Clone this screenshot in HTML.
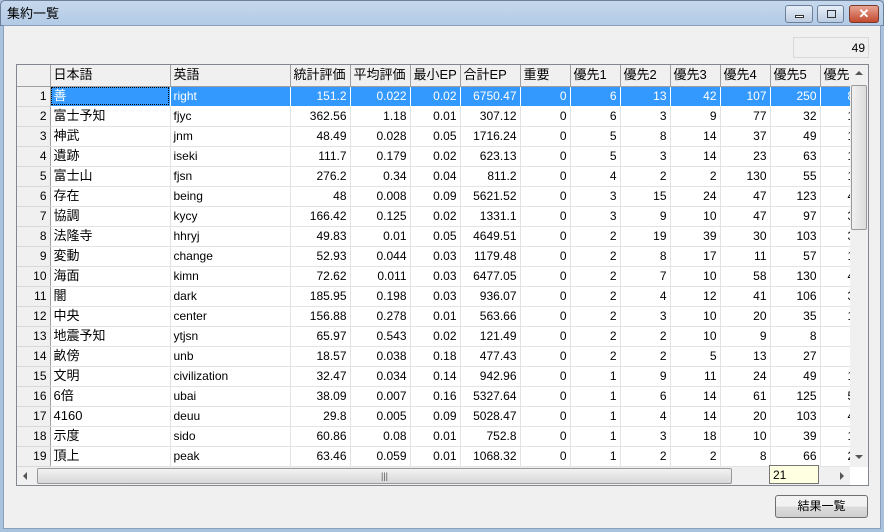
<!DOCTYPE html>
<html><head><meta charset="utf-8"><style>
*{box-sizing:border-box;margin:0;padding:0}
body{width:884px;height:532px;overflow:hidden;background:#a9c3de;font-family:"Liberation Sans","Noto Sans CJK JP",sans-serif;font-size:12px;color:#000;position:relative}
.title{position:absolute;left:0;top:0;width:884px;height:26px;background:linear-gradient(#c6d8ec,#b3cbe6);border-radius:5px 5px 0 0;border:1px solid #6b7f99}
.title span{position:absolute;left:6px;top:5px;font-size:13px;line-height:15px}
.client{position:absolute;left:3px;top:25px;width:878px;height:504px;background:#f0f0f0;border:1px solid #8aa0ba}
.cb{position:absolute;top:5px;height:18px;border:1px solid #6b7f99;border-radius:3px;background:linear-gradient(#e6eef8,#bccde2)}
.grid{position:absolute;left:16px;top:64px;width:853px;height:422px;border:1px solid #828790;background:#fff}
.clip{position:absolute;left:0;top:0;width:833px;height:402px;overflow:hidden}
table{border-collapse:collapse;table-layout:fixed;width:853px}
td{height:20px;line-height:14px;border-right:1px solid #e3e3e3;border-bottom:1px solid #e3e3e3;padding:0 3px;white-space:nowrap;overflow:hidden;text-align:right;vertical-align:middle}
tr.h td{background:#f0f0f0;border-right:1px solid #a0a0a0;border-bottom:1px solid #a0a0a0;text-align:left;font-size:13px;height:21px}
td.rh{background:#f0f0f0;border-right:1px solid #a0a0a0;border-bottom:1px solid #d8d8d8}
td.l{text-align:left}
td.j{text-align:left;font-size:13px}
td.z{text-align:left;padding-left:27px}
tr.h td.z{padding-left:3px}
tr.s td{background:#3399ff;color:#fff;border-color:#fff}
tr.s td.rh{background:#f0f0f0;color:#000;border-color:#a0a0a0 #a0a0a0 #d8d8d8 #a0a0a0}
tr.s td.f{outline:1px dotted #000;outline-offset:-2px}
.vs{position:absolute;left:833px;top:0;width:18px;height:402px;background:#f0f0f0}
.hs{position:absolute;left:0;top:402px;width:833px;height:18px;background:#f0f0f0}
</style></head><body>
<div class="title"><span>集約一覧</span></div>
<div class="cb" style="left:785px;width:28px"><div style="position:absolute;left:9px;top:9px;width:9px;height:3px;border:1px solid #333;background:#fff"></div></div>
<div class="cb" style="left:817px;width:27px"><div style="position:absolute;left:9px;top:4px;width:9px;height:8px;border:1px solid #333"></div></div>
<div class="cb" style="left:849px;width:30px;background:linear-gradient(#e8a493,#c24a2f);border-color:#7a3a2a;color:#fff;font-weight:bold;text-align:center;line-height:16px;font-size:13px">✕</div>
<div class="client"></div>
<div style="position:absolute;left:793px;top:37px;width:76px;height:21px;border:1px solid #d8d8d8;background:#f0f0f0;text-align:right;padding:3px 3px 0 0">49</div>
<div class="grid">
<div class="clip"><table>
<colgroup><col style="width:33px"><col style="width:120px"><col style="width:120px"><col style="width:60px"><col style="width:60px"><col style="width:50px"><col style="width:60px"><col style="width:50px"><col style="width:50px"><col style="width:50px"><col style="width:50px"><col style="width:50px"><col style="width:50px"><col style="width:50px"></colgroup>
<tr class="h"><td class="rh"></td><td>日本語</td><td>英語</td><td>統計評価</td><td>平均評価</td><td>最小EP</td><td>合計EP</td><td>重要</td><td>優先1</td><td>優先2</td><td>優先3</td><td>優先4</td><td>優先5</td><td class="z">優先6</td></tr>
<tr class="s"><td class="rh">1</td><td class="j f">善</td><td class="l">right</td><td>151.2</td><td>0.022</td><td>0.02</td><td>6750.47</td><td>0</td><td>6</td><td>13</td><td>42</td><td>107</td><td>250</td><td class="z">87</td></tr>
<tr><td class="rh">2</td><td class="j">富士予知</td><td class="l">fjyc</td><td>362.56</td><td>1.18</td><td>0.01</td><td>307.12</td><td>0</td><td>6</td><td>3</td><td>9</td><td>77</td><td>32</td><td class="z">17</td></tr>
<tr><td class="rh">3</td><td class="j">神武</td><td class="l">jnm</td><td>48.49</td><td>0.028</td><td>0.05</td><td>1716.24</td><td>0</td><td>5</td><td>8</td><td>14</td><td>37</td><td>49</td><td class="z">17</td></tr>
<tr><td class="rh">4</td><td class="j">遺跡</td><td class="l">iseki</td><td>111.7</td><td>0.179</td><td>0.02</td><td>623.13</td><td>0</td><td>5</td><td>3</td><td>14</td><td>23</td><td>63</td><td class="z">17</td></tr>
<tr><td class="rh">5</td><td class="j">富士山</td><td class="l">fjsn</td><td>276.2</td><td>0.34</td><td>0.04</td><td>811.2</td><td>0</td><td>4</td><td>2</td><td>2</td><td>130</td><td>55</td><td class="z">17</td></tr>
<tr><td class="rh">6</td><td class="j">存在</td><td class="l">being</td><td>48</td><td>0.008</td><td>0.09</td><td>5621.52</td><td>0</td><td>3</td><td>15</td><td>24</td><td>47</td><td>123</td><td class="z">47</td></tr>
<tr><td class="rh">7</td><td class="j">協調</td><td class="l">kycy</td><td>166.42</td><td>0.125</td><td>0.02</td><td>1331.1</td><td>0</td><td>3</td><td>9</td><td>10</td><td>47</td><td>97</td><td class="z">37</td></tr>
<tr><td class="rh">8</td><td class="j">法隆寺</td><td class="l">hhryj</td><td>49.83</td><td>0.01</td><td>0.05</td><td>4649.51</td><td>0</td><td>2</td><td>19</td><td>39</td><td>30</td><td>103</td><td class="z">37</td></tr>
<tr><td class="rh">9</td><td class="j">変動</td><td class="l">change</td><td>52.93</td><td>0.044</td><td>0.03</td><td>1179.48</td><td>0</td><td>2</td><td>8</td><td>17</td><td>11</td><td>57</td><td class="z">17</td></tr>
<tr><td class="rh">10</td><td class="j">海面</td><td class="l">kimn</td><td>72.62</td><td>0.011</td><td>0.03</td><td>6477.05</td><td>0</td><td>2</td><td>7</td><td>10</td><td>58</td><td>130</td><td class="z">47</td></tr>
<tr><td class="rh">11</td><td class="j">闇</td><td class="l">dark</td><td>185.95</td><td>0.198</td><td>0.03</td><td>936.07</td><td>0</td><td>2</td><td>4</td><td>12</td><td>41</td><td>106</td><td class="z">37</td></tr>
<tr><td class="rh">12</td><td class="j">中央</td><td class="l">center</td><td>156.88</td><td>0.278</td><td>0.01</td><td>563.66</td><td>0</td><td>2</td><td>3</td><td>10</td><td>20</td><td>35</td><td class="z">17</td></tr>
<tr><td class="rh">13</td><td class="j">地震予知</td><td class="l">ytjsn</td><td>65.97</td><td>0.543</td><td>0.02</td><td>121.49</td><td>0</td><td>2</td><td>2</td><td>10</td><td>9</td><td>8</td><td class="z"></td></tr>
<tr><td class="rh">14</td><td class="j">畝傍</td><td class="l">unb</td><td>18.57</td><td>0.038</td><td>0.18</td><td>477.43</td><td>0</td><td>2</td><td>2</td><td>5</td><td>13</td><td>27</td><td class="z"></td></tr>
<tr><td class="rh">15</td><td class="j">文明</td><td class="l">civilization</td><td>32.47</td><td>0.034</td><td>0.14</td><td>942.96</td><td>0</td><td>1</td><td>9</td><td>11</td><td>24</td><td>49</td><td class="z">17</td></tr>
<tr><td class="rh">16</td><td class="j">6倍</td><td class="l">ubai</td><td>38.09</td><td>0.007</td><td>0.16</td><td>5327.64</td><td>0</td><td>1</td><td>6</td><td>14</td><td>61</td><td>125</td><td class="z">57</td></tr>
<tr><td class="rh">17</td><td class="j">4160</td><td class="l">deuu</td><td>29.8</td><td>0.005</td><td>0.09</td><td>5028.47</td><td>0</td><td>1</td><td>4</td><td>14</td><td>20</td><td>103</td><td class="z">47</td></tr>
<tr><td class="rh">18</td><td class="j">示度</td><td class="l">sido</td><td>60.86</td><td>0.08</td><td>0.01</td><td>752.8</td><td>0</td><td>1</td><td>3</td><td>18</td><td>10</td><td>39</td><td class="z">17</td></tr>
<tr><td class="rh">19</td><td class="j">頂上</td><td class="l">peak</td><td>63.46</td><td>0.059</td><td>0.01</td><td>1068.32</td><td>0</td><td>1</td><td>2</td><td>2</td><td>8</td><td>66</td><td class="z">27</td></tr>
<tr><td class="rh">20</td><td class="j"></td><td></td><td></td><td></td><td></td><td></td><td></td><td></td><td></td><td></td><td></td><td></td><td></td></tr>
</table></div>
<div class="vs">
<div style="position:absolute;left:5px;top:6px;width:0;height:0;border:4px solid transparent;border-bottom:4px solid #555;border-top:0"></div>
<div style="position:absolute;left:1px;top:20px;width:16px;height:145px;border:1px solid #999;border-radius:2px;background:linear-gradient(90deg,#f0f0f0,#dcdcdc)"></div>
<div style="position:absolute;left:5px;top:390px;width:0;height:0;border:4px solid transparent;border-top:4px solid #555;border-bottom:0"></div>
</div>
<div class="hs">
<div style="position:absolute;left:6px;top:5px;width:0;height:0;border:4px solid transparent;border-right:4px solid #555;border-left:0"></div>
<div style="position:absolute;left:20px;top:1px;width:695px;height:16px;border:1px solid #999;border-radius:2px;background:linear-gradient(#f2f2f2,#d8d8d8);text-align:center;font-size:9px;line-height:14px;color:#555">|||</div>
<div style="position:absolute;left:823px;top:5px;width:0;height:0;border:4px solid transparent;border-left:4px solid #555;border-right:0"></div>
</div>
</div>
<div style="position:absolute;left:769px;top:465px;width:50px;height:19px;background:#ffffe1;border:1px solid #767676;padding:2px 3px">21</div>
<div style="position:absolute;left:775px;top:495px;width:93px;height:23px;border:1px solid #707070;border-radius:3px;background:linear-gradient(#f2f2f2 50%,#dddddd 50%,#cfcfcf);text-align:center;line-height:21px;font-size:12px">結果一覧</div>
</body></html>
